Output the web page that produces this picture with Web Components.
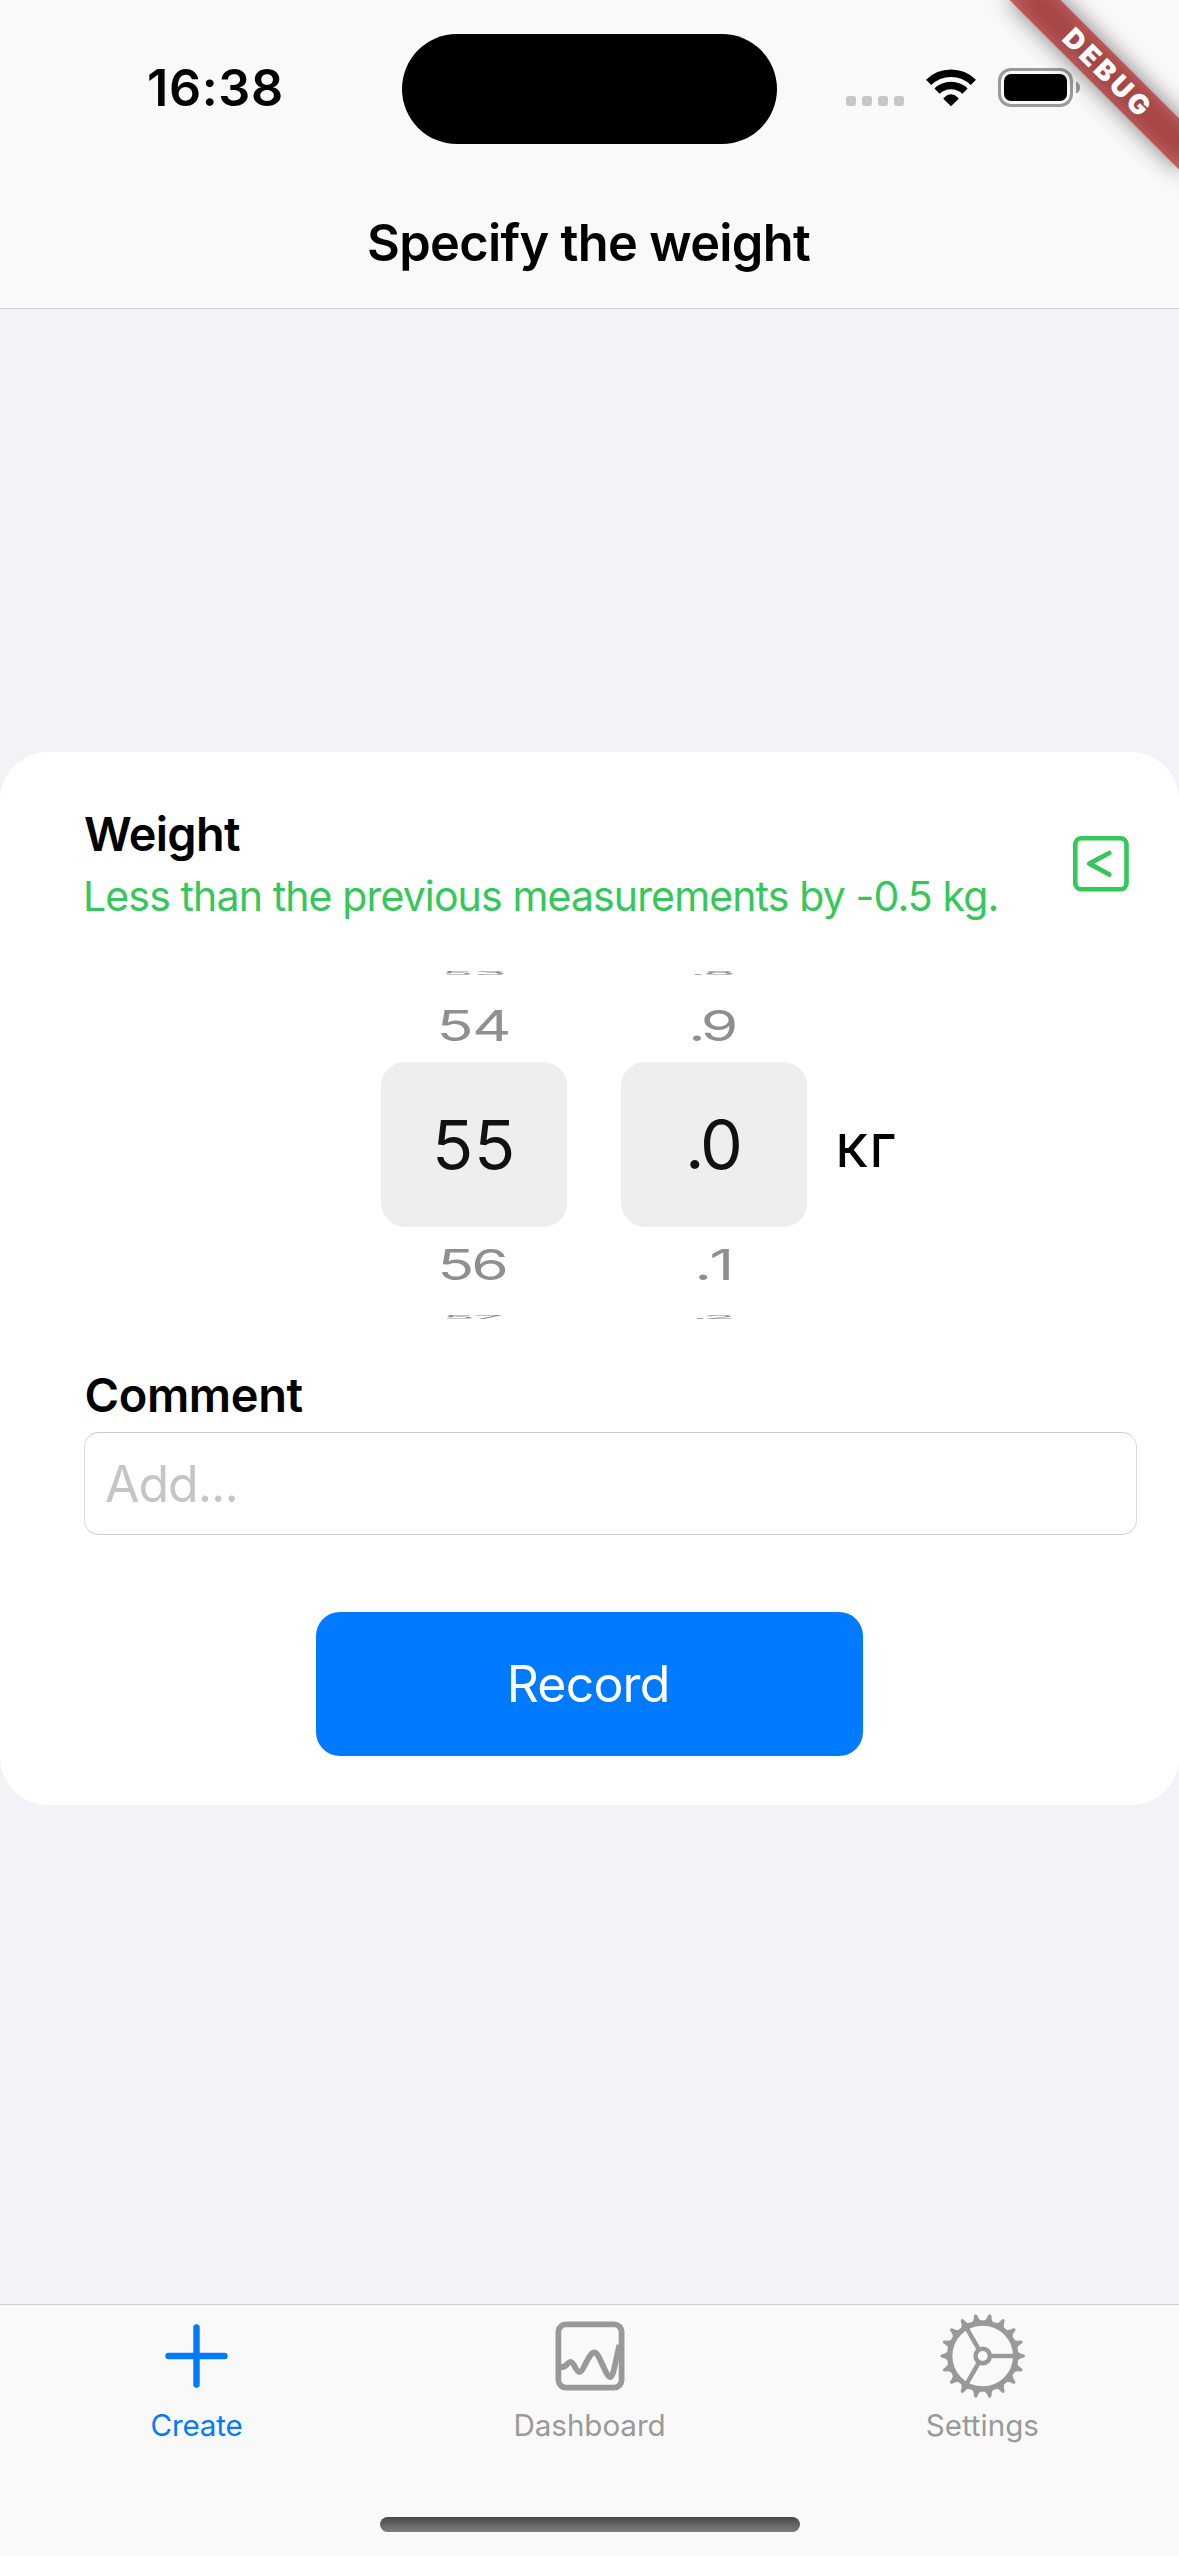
<!DOCTYPE html>
<html lang="en">
<head>
<meta charset="utf-8">
<title>Specify the weight</title>
<style>
html, body { margin: 0; padding: 0; }
body { width: 1179px; height: 2556px; overflow: hidden; background: #f2f2f7; font-family: Inter, "Liberation Sans", sans-serif; color: #000; }
</style>
</head>
<body>
<weight-app></weight-app>
<script>
const ctx = document.createElement('canvas').getContext('2d');

class Base extends HTMLElement {
  connectedCallback() {
    if (this.shadowRoot) return;
    this.attachShadow({ mode: 'open' }).innerHTML = this.render();
    this.ready && this.ready();
  }
  attr(n, d = '') { return this.getAttribute(n) ?? d; }
}

/* One line of text in a box that runs from cap height to baseline; tracking is set so the ink fills `w`. */
customElements.define('fit-text', class extends Base {
  render() {
    return `<style>
      :host { display: block; flex: none; width: ${this.attr('w')}px; font-size: ${this.attr('size')}px; font-weight: ${this.attr('weight', '400')}; line-height: .7276em; height: .7276em; white-space: pre; }
      span { display: block; width: max-content; }
    </style><span>${this.attr('text')}</span>`;
  }
  ready() {
    const t = this.attr('text'), s = this.shadowRoot.querySelector('span');
    ctx.font = `${this.attr('weight', '400')} ${this.attr('size')}px Inter`;
    const m = ctx.measureText(t);
    const ink = m.actualBoundingBoxRight + m.actualBoundingBoxLeft;
    s.style.letterSpacing = ((+this.attr('w') - ink) / Math.max(1, t.length - 1)).toFixed(3) + 'px';
    s.style.marginLeft = m.actualBoundingBoxLeft.toFixed(2) + 'px';
  }
});

customElements.define('status-bar', class extends Base {
  render() {
    return `<style>
      :host { display: flex; height: 177px; box-sizing: border-box; padding: 33.5px 97px 0 149px; }
      .time { width: 253.5px; padding-top: 36.5px; box-sizing: border-box; }
      .island { width: 375px; height: 110.5px; border-radius: 56px; background: #000; }
      .icons { flex: 1; display: flex; padding: 34.5px 0 0 69px; }
      svg { display: block; flex: none; }
      .dots { margin-top: 28px; } .wifi { margin: 1px 0 0 70px; } .bat { margin-left: 22px; }
    </style>
    <div class="time"><fit-text text="16:38" size="50.3" weight="600" w="132"></fit-text></div>
    <div class="island"></div>
    <div class="icons">
      <svg class="dots" width="58" height="10" fill="#c7c7c7" style="margin-right:-47.5px"><rect width="10" height="10" rx="3"/><rect x="16" width="10" height="10" rx="3"/><rect x="32" width="10" height="10" rx="3"/><rect x="48" width="10" height="10" rx="3"/></svg>
      <svg class="wifi" width="50" height="38" viewBox="0 0 50 38"><g fill="none" stroke="#000" stroke-width="7.5"><path d="M2.6 13.4A32 32 0 0 1 47.4 13.4"/><path d="M11 22.1A20.2 20.2 0 0 1 39 22.1"/></g><path d="M25 37.3L17.6 29.9Q17.2 29.3 17.9 28.7Q25 22 32.1 28.7Q32.8 29.3 32.4 29.9Z"/></svg>
      <svg class="bat" width="84" height="40" viewBox="0 0 84 40"><rect x="1.5" y="1.5" width="72" height="36" rx="11.5" fill="none" stroke="#999" stroke-width="3"/><rect x="6" y="6" width="63" height="27" rx="7"/><path d="M78 13.5Q82 15 82 19.5T78 25.5Z" fill="#999"/></svg>
    </div>`;
  }
});

customElements.define('debug-banner', class extends Base {
  render() {
    return `<style>
      :host { position: absolute; right: 0; top: 0; width: 240px; height: 240px; overflow: hidden; }
      .strip { position: absolute; left: 47.9px; top: 54.1px; width: 240px; height: 36px; transform: rotate(45deg); }
      .shadow { position: absolute; inset: 0; background: rgba(0,0,0,.5); filter: blur(11.9px); }
      .band { position: absolute; inset: 0; background: rgba(183,28,28,.627); display: flex; align-items: center; justify-content: center; color: #fff; }
    </style><div class="strip"><div class="shadow"></div><div class="band"><fit-text text="DEBUG" size="27.5" weight="900" w="109"></fit-text></div></div>`;
  }
});

customElements.define('nav-title', class extends Base {
  render() {
    return `<style>:host { display: flex; justify-content: center; height: 131px; padding-top: 48px; box-sizing: border-box; }</style>
    <fit-text text="${this.attr('text')}" size="50.5" weight="600" w="441"></fit-text>`;
  }
});

customElements.define('wheel-picker', class extends Base {
  render() {
    const v = this.attr('values').split(' '), w = this.attr('widths').split(' ');
    const cls = ['edge', 'near up', 'mid', 'near down', 'edge'];
    return `<style>
      :host { display: flex; flex-direction: column; width: 186px; color: #8f8f8f; }
      div { display: flex; align-items: center; justify-content: center; flex: none; box-sizing: border-box; }
      .edge { height: 4.6px; } .edge fit-text { transform: scale(.78,.08); margin: -30px 0; }
      .near { height: 87px; } .near fit-text { transform: scale(.89,.615); }
      .up { padding-top: 14px; } .down { padding-bottom: 12px; }
      .mid { height: 165px; border-radius: 24px; background: #eee; color: #111; padding: 1px 0 0 1px; }
    </style>` + v.map((t, i) => `<div class="${cls[i]}"><fit-text text="${t}" size="68" w="${w[i]}"></fit-text></div>`).join('');
  }
});

customElements.define('trend-icon', class extends Base {
  render() {
    return `<style>:host { display: block; } svg { display: block; }</style>
    <svg width="56" height="56" viewBox="0 0 56 56" fill="none" stroke="#34c759"><rect x="2.3" y="2.3" width="51.2" height="51" rx="6" stroke-width="4.6"/><path d="M36.3 17L16.3 27.7L36.3 38.5" stroke-width="4.8" stroke-linecap="round" stroke-linejoin="round"/></svg>`;
  }
});

customElements.define('comment-field', class extends Base {
  render() {
    return `<style>:host { display: block; box-sizing: border-box; height: 103px; border: 1px solid #ccc; border-left-color: #dadada; border-right-color: #dadada; border-radius: 15px; padding: 33px 0 0 21.5px; color: #c5c5c7; }</style>
    <fit-text text="Add..." size="50" w="129.5"></fit-text>`;
  }
});

customElements.define('record-button', class extends Base {
  render() {
    return `<style>:host { display: flex; align-items: center; justify-content: center; width: 547px; height: 144px; border-radius: 24px; background: #007aff; color: #fff; box-sizing: border-box; padding: 1px 1.5px 0 0; }</style>
    <fit-text text="Record" size="50" w="156"></fit-text>`;
  }
});

customElements.define('weight-card', class extends Base {
  render() {
    return `<style>
      :host { display: block; height: 1053px; background: #fff; border-radius: 48px; box-sizing: border-box; padding: 65px 42px 0 83.5px; }
      .head { display: flex; justify-content: space-between; height: 154px; }
      .titles { padding-left: 1.5px; } .green { color: #34c759; margin: 31.5px 0 0 1px; }
      trend-icon { margin: 19px 8.5px 0 0; }
      .wheels { display: flex; gap: 54px; height: 349px; margin-left: 297.5px; }
      .unit { margin: 152.5px 0 0 -22px; }
      .label { padding: 58px 0 0 3px; height: 112px; box-sizing: border-box; }
      record-button { margin: 77.5px 0 0 232.5px; }
    </style>
    <div class="head"><div class="titles"><fit-text text="Weight" size="46.8" weight="600" w="155"></fit-text>
      <fit-text class="green" text="Less than the previous measurements by -0.5 kg." size="41" w="910.5"></fit-text></div><trend-icon></trend-icon></div>
    <div class="wheels">
      <wheel-picker values="53 54 55 56 57" widths="75 75 75 72 70"></wheel-picker>
      <wheel-picker values=".8 .9 .0 .1 .2" widths="50 48 49 34 46"></wheel-picker>
      <fit-text class="unit" text="кг" size="61" w="56"></fit-text>
    </div>
    <div class="label"><fit-text text="Comment" size="47" weight="600" w="216"></fit-text></div>
    <comment-field></comment-field>
    <record-button></record-button>`;
  }
});

customElements.define('tab-item', class extends Base {
  render() {
    return `<style>
      :host { flex: 1; display: flex; flex-direction: column; align-items: center; color: #999; }
      :host([active]) { color: #007aff; }
      .icon { height: 110px; } ::slotted(svg) { display: block; }
    </style><div class="icon"><slot></slot></div><fit-text text="${this.attr('text')}" size="29.6" weight="400" w="${this.attr('w')}"></fit-text>`;
  }
});

const teeth = Array.from({ length: 18 }, (_, i) => `<path transform="rotate(${i * 20} 45 45)" d="M78 38Q80.500 42.500 85.500 43.200Q87.400 43.700 87.400 45Q87.400 46.300 85.500 46.800Q80.500 47.500 78 52Z"/>`).join('');
const spokes = [0, 120, 240].map(a => `<path transform="rotate(${a} 45 45)" d="M53 45H78"/>`).join('');

customElements.define('tab-bar', class extends Base {
  render() {
    return `<style>
      :host { display: flex; flex-direction: column; align-items: center; height: 252px; box-sizing: border-box; border-top: 1px solid #d0d0d4; background: #f9f9f9; }
      .tabs { display: flex; width: 100%; height: 212px; }
      .home { width: 420px; height: 15px; border-radius: 8px; background: linear-gradient(#484848, #7e7e7e); }
    </style>
    <div class="tabs">
      <tab-item active text="Create" w="90"><svg width="90" height="110" fill="none" stroke="#007aff" stroke-width="6.4" stroke-linecap="round"><path d="M44.500 22.500V79.500M16.500 51H72.500"/></svg></tab-item>
      <tab-item text="Dashboard" w="148"><svg width="90" height="110" fill="none" stroke="#999" stroke-width="5.800" stroke-linejoin="round"><rect x="13.400" y="19.400" width="63.200" height="63.200" rx="7.500"/><path d="M15 62H18C22 62 23 57 26 57C30 57 31 67 35 67C39 67 44 47.500 50 47.500C55 47.500 61 72 66 72C69 72 71 55 75 40" transform="translate(-.5 0)"/></svg></tab-item>
      <tab-item text="Settings" w="111.500"><svg width="90" height="110" fill="#999"><g transform="translate(-0.300 6)">${teeth}<g fill="none" stroke="#999"><circle cx="45" cy="45" r="33" stroke-width="5.400"/><circle cx="45" cy="45" r="7.200" stroke-width="4.500"/><g stroke-width="4.400">${spokes}</g></g></g></svg></tab-item>
    </div>
    <div class="home"></div>`;
  }
});

customElements.define('weight-app', class extends Base {
  render() {
    return `<style>
      :host { display: flex; flex-direction: column; width: 1179px; height: 2556px; position: relative; background: #f2f2f7; overflow: hidden; }
      header { height: 309px; box-sizing: border-box; background: #f9f9f9; border-bottom: 1px solid #d0d0d0; flex: none; }
      main { flex: 1; padding-top: 442.500px; }
    </style>
    <header><status-bar></status-bar><nav-title text="Specify the weight"></nav-title></header>
    <main><weight-card></weight-card></main>
    <tab-bar></tab-bar>
    <debug-banner></debug-banner>`;
  }
});
</script>
</body>
</html>
